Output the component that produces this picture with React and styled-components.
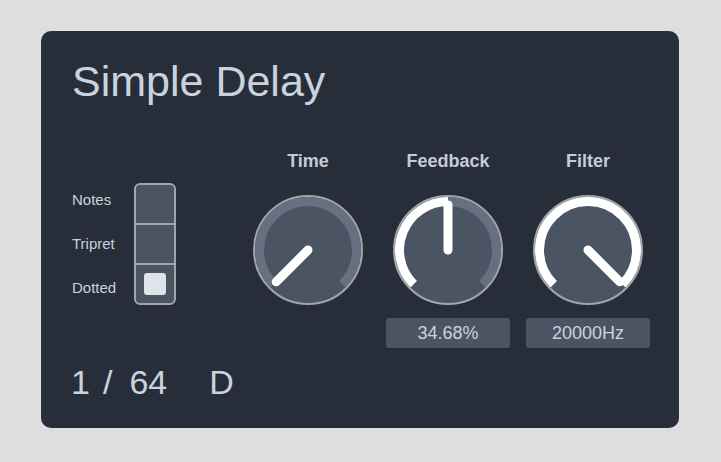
import React from "react";
import styled, { createGlobalStyle } from "styled-components";

const Global = createGlobalStyle`
  html, body { margin: 0; padding: 0; background: #dedede; }
  body { font-family: "Liberation Sans", Arial, sans-serif; }
`;

const Page = styled.div`
  padding: 31px 0 0 41px;
`;

const Panel = styled.div`
  box-sizing: border-box;
  width: 638px;
  height: 397px;
  border-radius: 10px;
  background: #282e39;
  padding: 26px 28px 0 30px;
  color: #c8d1dd;
`;

const Title = styled.h1`
  margin: 0 0 0 1px;
  font-size: 43px;
  line-height: 48px;
  font-weight: 400;
  color: #c9d3df;
`;

const Body = styled.div`
  display: grid;
  grid-template-columns: 175px auto;
  margin-top: 46px;
`;

const LeftCol = styled.div`
  display: flex;
  flex-direction: column;
  padding-top: 27px;
`;

const SwitchRow = styled.div`
  display: flex;
  align-items: center;
`;

const LabelList = styled.div`
  box-sizing: border-box;
  width: 63px;
  padding-left: 1px;
  display: flex;
  flex-direction: column;
`;

const OptionLabel = styled.div`
  font-size: 15px;
  line-height: 44px;
  color: #c8d1dd;
`;

const Switch = styled.div`
  box-sizing: border-box;
  width: 42px;
  border: 2px solid #a2a5aa;
  border-radius: 6px;
  background: #4b5462;
  overflow: hidden;
  display: flex;
  flex-direction: column;
`;

const Cell = styled.div`
  height: 38px;
  display: flex;
  align-items: center;
  justify-content: center;
  border-top: ${(p) => (p.$first ? "none" : "2px solid #a2a5aa")};
`;

const Mark = styled.div`
  width: 22px;
  height: 22px;
  border-radius: 3px;
  background: #dfe4eb;
`;

const Readout = styled.div`
  display: flex;
  margin: 52px 0 0 0;
  font-size: 34px;
  line-height: 40px;
  color: #c9d3df;
`;

const ReadoutPart = styled.span`
  margin-left: ${(p) => p.$space || 0}px;
`;

const Knobs = styled.div`
  display: flex;
  gap: 16px;
`;

const KnobCol = styled.div`
  width: 124px;
  display: flex;
  flex-direction: column;
  align-items: center;
`;

const KnobLabel = styled.div`
  font-size: 18px;
  font-weight: 700;
  line-height: 20px;
  color: #c3ccd8;
`;

const KnobSvg = styled.svg`
  display: block;
  margin-top: 24px;
`;

const ValueBox = styled.div`
  box-sizing: border-box;
  margin-top: 13px;
  width: 124px;
  height: 30px;
  border-radius: 3px;
  background: #4b5462;
  font-size: 18px;
  line-height: 30px;
  text-align: center;
  color: #c9d3df;
  visibility: ${(p) => (p.$hidden ? "hidden" : "visible")};
`;

const C = 55;
const pt = (deg, r) => {
  const a = (deg * Math.PI) / 180;
  return [C + r * Math.sin(a), C - r * Math.cos(a)];
};
const arc = (from, to, r) => {
  const [x1, y1] = pt(from, r);
  const [x2, y2] = pt(to, r);
  const large = to - from > 180 ? 1 : 0;
  return `M ${x1} ${y1} A ${r} ${r} 0 ${large} 1 ${x2} ${y2}`;
};

function Knob({ value }) {
  const end = -135 + 270 * value;
  const [px, py] = pt(end, 45);
  return (
    <KnobSvg width="110" height="110" viewBox="0 0 110 110">
      <circle cx={C} cy={C} r="54" fill="#4b5462" stroke="#a3a5a8" strokeWidth="2" />
      <path d={arc(-135, 135, 48.5)} fill="none" stroke="#667080" strokeWidth="9" />
      {value > 0 && (
        <path d={arc(-135, end, 48.5)} fill="none" stroke="#ffffff" strokeWidth="9" />
      )}
      <line x1={C} y1={C} x2={px} y2={py} stroke="#ffffff" strokeWidth="9" strokeLinecap="round" />
    </KnobSvg>
  );
}

const knobs = [
  { label: "Time", value: 0, text: "", hidden: true },
  { label: "Feedback", value: 0.5, text: "34.68%" },
  { label: "Filter", value: 1, text: "20000Hz" },
];

export default function App() {
  return (
    <>
      <Global />
      <Page>
        <Panel>
          <Title>Simple Delay</Title>
          <Body>
            <LeftCol>
              <SwitchRow>
                <LabelList>
                  <OptionLabel>Notes</OptionLabel>
                  <OptionLabel>Tripret</OptionLabel>
                  <OptionLabel>Dotted</OptionLabel>
                </LabelList>
                <Switch>
                  <Cell $first />
                  <Cell />
                  <Cell>
                    <Mark />
                  </Cell>
                </Switch>
              </SwitchRow>
              <Readout>
                <ReadoutPart>1</ReadoutPart>
                <ReadoutPart $space={13}>/</ReadoutPart>
                <ReadoutPart $space={17}>64</ReadoutPart>
                <ReadoutPart $space={42}>D</ReadoutPart>
              </Readout>
            </LeftCol>
            <Knobs>
              {knobs.map((k) => (
                <KnobCol key={k.label}>
                  <KnobLabel>{k.label}</KnobLabel>
                  <Knob value={k.value} />
                  <ValueBox $hidden={k.hidden}>{k.text || "\u00a0"}</ValueBox>
                </KnobCol>
              ))}
            </Knobs>
          </Body>
        </Panel>
      </Page>
    </>
  );
}
